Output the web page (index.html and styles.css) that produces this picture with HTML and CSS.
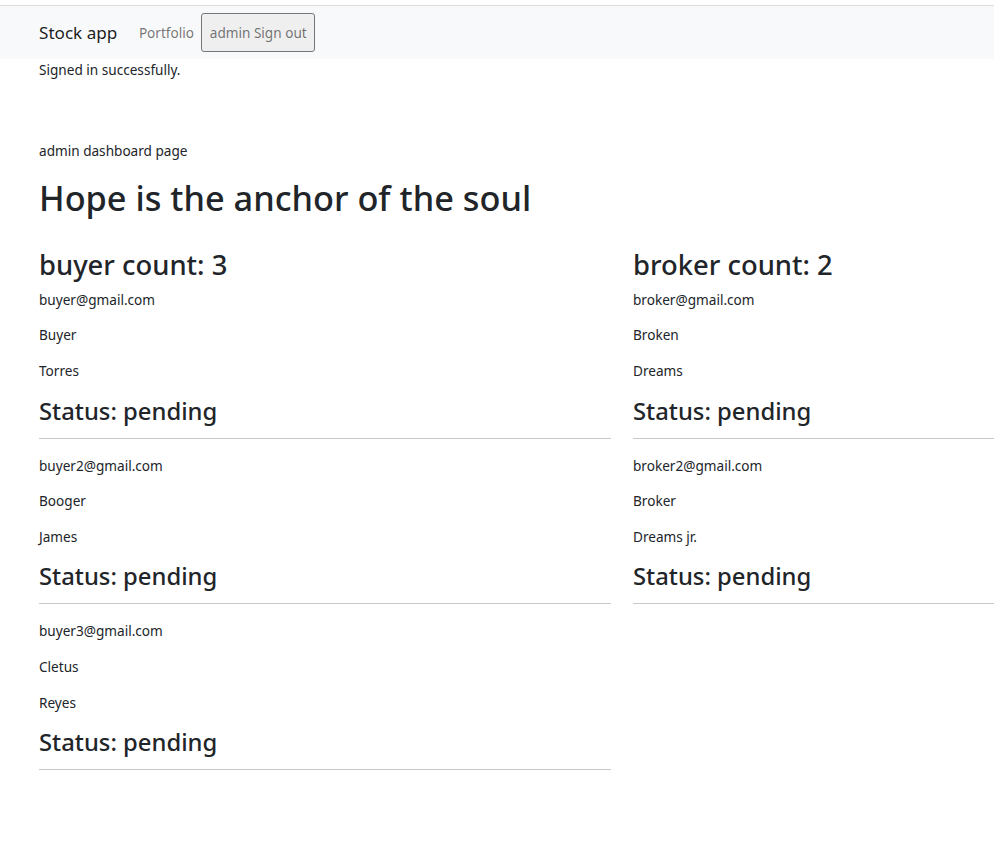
FILE: index.html
```html
<!DOCTYPE html>
<html lang="en">
<head>
<meta charset="utf-8">
<title>Stock app</title>
<link rel="stylesheet" href="styles.css">
</head>
<body>
<header class="topbar">
  <nav class="topbar-inner">
    <a class="brand" href="#">Stock app</a>
    <a class="nav-link" href="#">Portfolio</a>
    <form class="signout-form">
      <button type="button" class="nav-link signout">admin Sign out</button>
    </form>
  </nav>
</header>

<main class="page">
  <p class="flash">Signed in successfully.</p>
  <p class="lead-line">admin dashboard page</p>
  <h1 class="title">Hope is the anchor of the soul</h1>

  <div class="columns">
    <section class="column">
      <h2 class="count">buyer count: 3</h2>
      <div class="entry">
        <p>buyer@gmail.com</p>
        <p>Buyer</p>
        <p>Torres</p>
        <h3 class="status">Status: pending</h3>
        <hr>
      </div>
      <div class="entry">
        <p>buyer2@gmail.com</p>
        <p>Booger</p>
        <p>James</p>
        <h3 class="status">Status: pending</h3>
        <hr>
      </div>
      <div class="entry">
        <p>buyer3@gmail.com</p>
        <p>Cletus</p>
        <p>Reyes</p>
        <h3 class="status">Status: pending</h3>
        <hr>
      </div>
    </section>

    <section class="column">
      <h2 class="count">broker count: 2</h2>
      <div class="entry">
        <p>broker@gmail.com</p>
        <p>Broken</p>
        <p>Dreams</p>
        <h3 class="status">Status: pending</h3>
        <hr>
      </div>
      <div class="entry">
        <p>broker2@gmail.com</p>
        <p>Broker</p>
        <p>Dreams jr.</p>
        <h3 class="status">Status: pending</h3>
        <hr>
      </div>
    </section>
  </div>
</main>
</body>
</html>
```

FILE: styles.css
```css
html, body {
  margin: 0;
  padding: 0;
}

body {
  font-family: "Noto Sans", "Open Sans", sans-serif;
  font-size: 13.6px;
  line-height: 21.6px;
  color: #212529;
  background: #fff;
  overflow-x: hidden;
}

/* top navigation bar */
.topbar {
  margin-top: 5px;
  border-top: 1px solid #dcdcdc;
  background: #f8f9fa;
  padding: 7px 0;
}

.topbar-inner {
  display: flex;
  align-items: center;
  padding-left: 39px;
}

.brand {
  font-size: 17.1px;
  line-height: 27px;
  padding: 4.5px 0;
  margin-right: 14.4px;
  color: rgba(0, 0, 0, 0.9);
  text-decoration: none;
}

.nav-link {
  display: block;
  padding: 7.2px;
  font-family: inherit;
  font-size: 13.6px;
  line-height: 21.6px;
  color: rgba(0, 0, 0, 0.55);
  text-decoration: none;
}

.signout-form {
  margin: 0;
}

.signout {
  padding: 7.5px 7.6px;
  background: #efefef;
  border: 1px solid #767676;
  border-radius: 3px;
  cursor: pointer;
}

/* page body */
.page {
  padding-left: 39px;
  width: 1167px;
}

.page p {
  margin: 0 0 14px;
}

.page .flash {
  margin: 0 0 60px;
}

.title {
  font-size: 34.3px;
  line-height: 43px;
  font-weight: 500;
  margin: 0 0 29px;
}

.columns {
  display: grid;
  grid-template-columns: 572px 572px;
  column-gap: 22px;
}

.count {
  font-size: 27.4px;
  line-height: 34px;
  font-weight: 500;
  margin: 0 0 7px;
}

.status {
  font-size: 23.8px;
  line-height: 30px;
  font-weight: 500;
  margin: 0;
}

hr {
  margin: 12px 0 16px;
  border: 0;
  border-top: 1px solid #c8c9ca;
  height: 0;
}
```
